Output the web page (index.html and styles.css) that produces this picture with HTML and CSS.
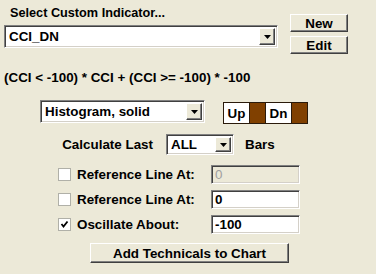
FILE: index.html
```html
<!DOCTYPE html>
<html lang="en">
<head>
  <meta charset="UTF-8">
  <title>Custom Indicator</title>
  <link rel="stylesheet" href="styles.css">
</head>
<body>
  <div class="dialog">
    <div class="header">
      <div class="pick">
        <div class="title">Select Custom Indicator...</div>
        <div class="combo combo-main">
          <span class="value">CCI_DN</span>
          <span class="drop"><svg width="7" height="4" viewBox="0 0 7 4"><polygon points="0,0 7,0 3.5,4" fill="#000"/></svg></span>
        </div>
      </div>
      <div class="actions">
        <button class="btn btn-small">New</button>
        <button class="btn btn-small">Edit</button>
      </div>
    </div>

    <div class="formula">(CCI &lt; -100) * CCI + (CCI &gt;= -100) * -100</div>

    <div class="style-row">
      <div class="combo combo-style">
        <span class="value">Histogram, solid</span>
        <span class="drop"><svg width="7" height="4" viewBox="0 0 7 4"><polygon points="0,0 7,0 3.5,4" fill="#000"/></svg></span>
      </div>
      <div class="colors">
        <span class="swatch-label">Up</span>
        <span class="swatch"></span>
        <span class="swatch-label">Dn</span>
        <span class="swatch"></span>
      </div>
    </div>

    <div class="calc-row">
      <span class="calc-label">Calculate Last</span>
      <div class="combo combo-bars">
        <span class="value">ALL</span>
        <span class="drop"><svg width="7" height="4" viewBox="0 0 7 4"><polygon points="0,0 7,0 3.5,4" fill="#000"/></svg></span>
      </div>
      <span class="bars">Bars</span>
    </div>

    <div class="opt-row">
      <span class="check"></span>
      <span class="opt-label">Reference Line At:</span>
      <span class="edit disabled">0</span>
    </div>
    <div class="opt-row">
      <span class="check"></span>
      <span class="opt-label">Reference Line At:</span>
      <span class="edit">0</span>
    </div>
    <div class="opt-row">
      <span class="check"><svg width="9" height="9" viewBox="0 0 9 9"><polyline points="1.5,4 3.5,6.5 7.5,1.5" fill="none" stroke="#000" stroke-width="1.8"/></svg></span>
      <span class="opt-label">Oscillate About:</span>
      <span class="edit">-100</span>
    </div>

    <div class="submit-row">
      <button class="btn btn-wide">Add Technicals to Chart</button>
    </div>
  </div>
</body>
</html>
```

FILE: styles.css
```css
body {
  margin: 0;
  background: #ece9d8;
  font-family: "Liberation Sans", Arial, sans-serif;
  font-weight: bold;
  font-size: 13.4px;
  color: #000;
}

.dialog {
  width: 376px;
  height: 274px;
  padding-left: 4px;
  box-sizing: border-box;
}

.header {
  display: flex;
}

.title {
  height: 25px;
  line-height: 26px;
  padding-left: 6px;
  font-size: 12.7px;
}

/* sunken field */
.combo,
.edit {
  box-sizing: border-box;
  background: #fff;
  border: 1px solid;
  border-color: #808080 #fff #fff #808080;
  box-shadow: inset 1px 1px 0 #404040, inset -1px -1px 0 #d4d0c8;
}

.combo {
  display: flex;
  align-items: stretch;
  padding: 2px;
}

.combo .value {
  flex: 1;
  padding-left: 2px;
  display: flex;
  align-items: center;
}

.drop {
  width: 16px;
  box-sizing: border-box;
  display: flex;
  align-items: center;
  justify-content: center;
  background: #ece9d8;
  border: 1px solid;
  border-color: #fff #404040 #404040 #fff;
  box-shadow: inset -1px -1px 0 #808080;
}

.combo-main {
  width: 274px;
  height: 23px;
}

.actions {
  display: flex;
  flex-direction: column;
  gap: 4px;
  margin-left: 12px;
  padding-top: 14px;
}

.btn {
  font: inherit;
  color: #000;
  background: #ece9d8;
  border: 1px solid;
  border-color: #fff #404040 #404040 #fff;
  box-shadow: inset -1px -1px 0 #808080;
  padding: 0;
}

.btn-small {
  width: 58px;
  height: 18px;
}

.formula {
  margin-top: 16px;
  line-height: 16px;
}

.style-row {
  display: flex;
  align-items: flex-start;
  margin-top: 14px;
  padding-left: 36px;
}

.combo-style {
  width: 165px;
  height: 23px;
}

.colors {
  display: flex;
  margin-left: 18px;
  margin-top: 2px;
  height: 22px;
  border: 1px solid #2a1a0a;
  box-sizing: border-box;
}

.swatch-label {
  width: 25px;
  background: #fff;
  display: flex;
  align-items: center;
  justify-content: center;
}

.swatch {
  width: 15px;
  background: #804000;
  border-left: 1px solid #2a1a0a;
}

.swatch + .swatch-label {
  border-left: 1px solid #2a1a0a;
}

.calc-row {
  display: flex;
  align-items: center;
  margin-top: 10px;
}

.calc-label {
  width: 149px;
  text-align: right;
  margin-right: 13px;
}

.combo-bars {
  width: 68px;
  height: 21px;
}

.bars {
  margin-left: 11px;
}

.opt-row {
  display: flex;
  align-items: center;
  margin-top: 6px;
  padding-left: 54px;
}

.calc-row + .opt-row {
  margin-top: 10px;
}

.check {
  width: 13px;
  height: 13px;
  box-sizing: border-box;
  background: #fff;
  border: 1px solid #b0b0a8;
  display: flex;
  align-items: center;
  justify-content: center;
}

.opt-label {
  width: 134px;
  margin-left: 6px;
}

.edit {
  width: 89px;
  height: 19px;
  padding-left: 3px;
  display: flex;
  align-items: center;
}

.edit.disabled {
  background: #ece9d8;
  color: #a0a0a0;
  font-weight: normal;
}

.submit-row {
  margin-top: 9px;
  padding-left: 86px;
}

.btn-wide {
  width: 199px;
  height: 20px;
}
```
